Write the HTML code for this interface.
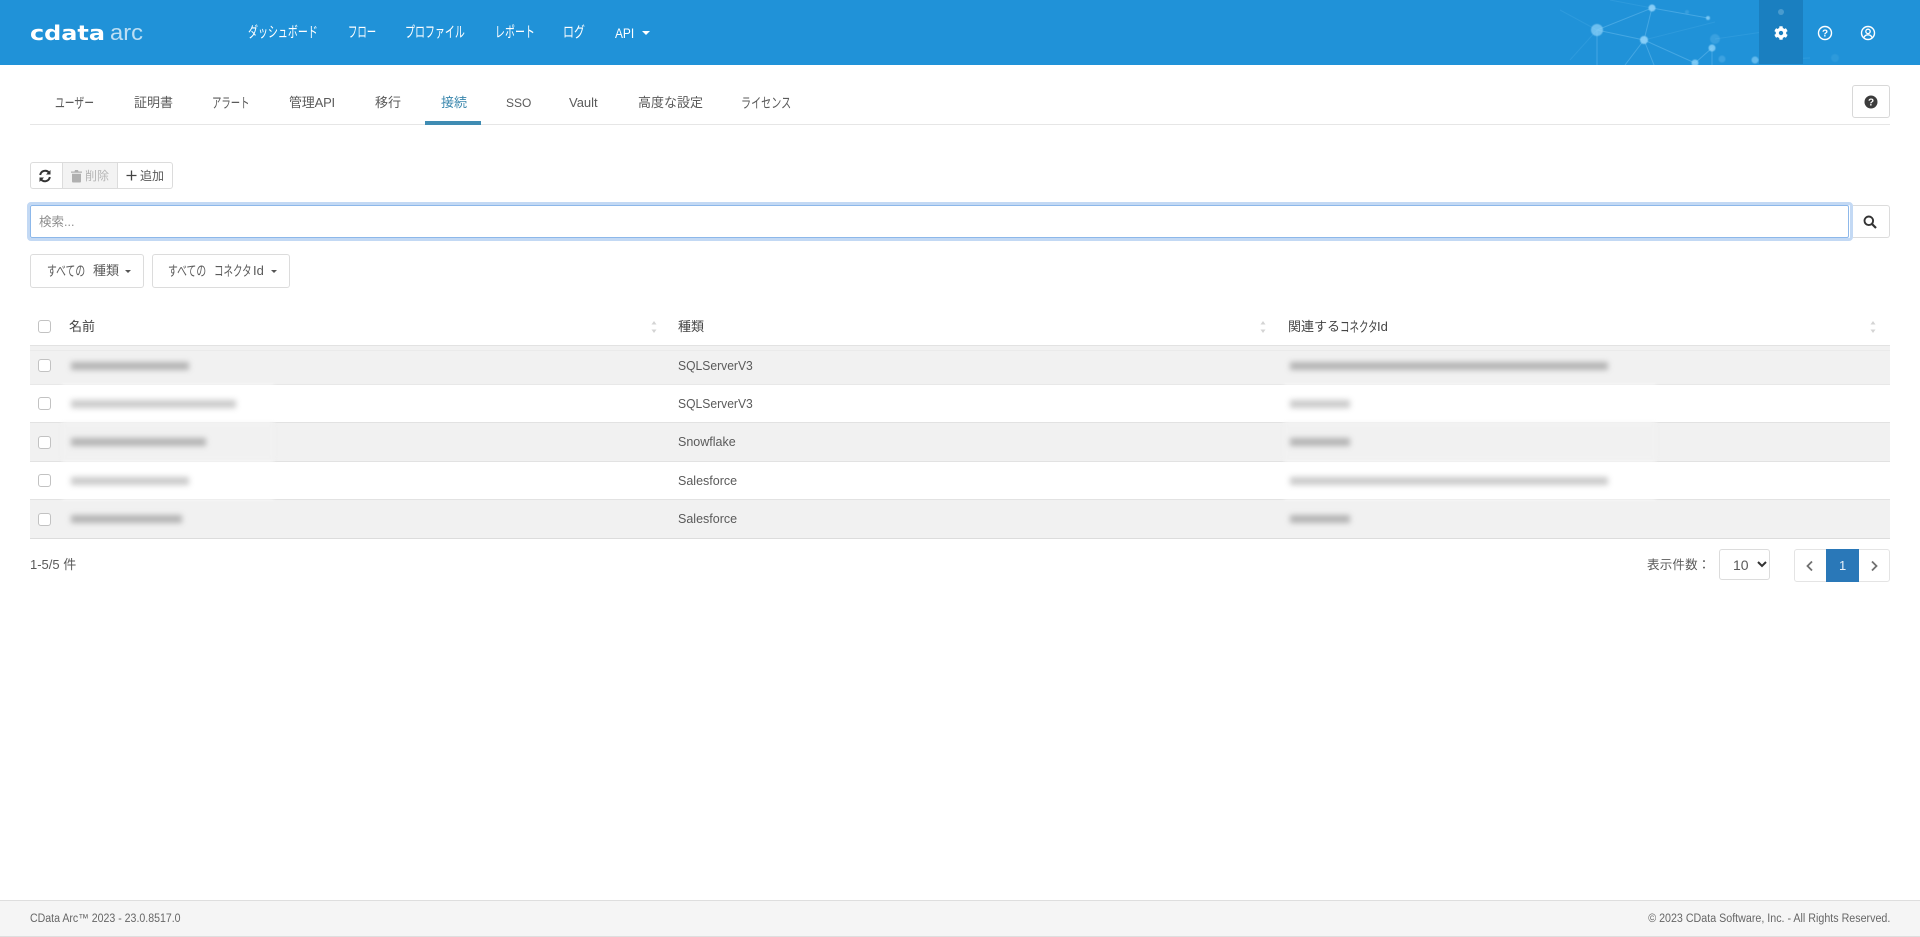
<!DOCTYPE html>
<html lang="ja">
<head>
<meta charset="utf-8">
<title>CData Arc</title>
<style>
html,body{margin:0;padding:0;background:#fff}
body{position:relative;width:1920px;height:937px;overflow:hidden;font-family:"Liberation Sans","Noto Sans CJK JP",sans-serif;font-size:13px;color:#5a5a5a}
.a{position:absolute;box-sizing:border-box}
.t{position:absolute;white-space:nowrap;line-height:20px;height:20px;transform-origin:left center}
.n{color:#fff;font-size:15px;top:23px}
.k{color:#5a5a5a;font-size:13px;top:93px}
.b{background:#fff;border:1px solid #dcdcdc}
.row{position:absolute;left:30px;width:1860px}
.line{position:absolute;left:30px;width:1860px;height:1px;background:#e2e2e2}
.cb{position:absolute;left:38px;width:13px;height:13px;border:1px solid #c2c2c2;border-radius:3px;background:#fff;box-sizing:border-box}
.bl{position:absolute;height:8px;background:#8a8a8a;filter:blur(3px);opacity:.6}
.patch{position:absolute;filter:blur(2px)}
.caret{position:absolute;width:0;height:0;border-left:3px solid transparent;border-right:3px solid transparent;border-top:3px solid #555}
</style>
</head>
<body>
<!-- header -->
<div class="a" style="left:0;top:0;width:1920px;height:65px;background:#2092d8;overflow:hidden">
  <svg class="a" style="left:1500px;top:0" width="420" height="65" viewBox="1500 0 420 65">
    <g stroke="#7cc8f5" stroke-width="1" opacity=".4" fill="none">
      <path d="M1597 30L1652 8L1708 18M1652 8L1644 40L1597 30M1644 40L1695 63M1644 40L1660 80M1597 30V65M1644 40L1625 65M1695 63L1712 48V65"/>
    </g>
    <g stroke="#7cc8f5" stroke-width="1" opacity=".15" fill="none">
      <path d="M1644 40L1715 22M1715 39L1790 28M1560 10L1597 30M1597 30L1570 60M1610 0L1652 8M1755 60L1810 58"/>
    </g>
    <g fill="#8fd3fa" style="filter:blur(.6px)">
      <circle cx="1597" cy="30" r="6" opacity=".7"/>
      <circle cx="1652" cy="8" r="3.5" opacity=".9"/>
      <circle cx="1708" cy="18" r="2" opacity=".8"/>
      <circle cx="1644" cy="40" r="4" opacity=".9"/>
      <circle cx="1712" cy="48" r="3.500" opacity=".8"/>
      <circle cx="1695" cy="63" r="3.500" opacity=".8"/>
      <circle cx="1755" cy="60" r="3.500" opacity=".6"/>
      <circle cx="1715" cy="39" r="5" opacity=".22"/>
      <circle cx="1722" cy="59" r="3.500" opacity=".25"/>
      <circle cx="1687" cy="12" r="2" opacity=".2"/>
      <circle cx="1835" cy="58" r="4" opacity=".12"/>
    </g>
  </svg>
  <div class="a" style="left:1759px;top:0;width:44px;height:64px;background:#1a7fc0"></div>
  <svg class="a" style="left:1759px;top:0" width="44" height="30"><circle cx="22" cy="12" r="3" fill="#5ea6d4" opacity=".7"/></svg>

  <svg class="a" style="left:28px;top:20px" width="125" height="26" viewBox="0 0 125 26">
    <text x="2" y="0" transform="translate(0,20) scale(1,1.15)" font-family="DejaVu Sans" font-weight="700" font-size="18" fill="#fff" textLength="75" lengthAdjust="spacingAndGlyphs">cdata</text>
    <text x="82" y="20" font-family="Liberation Sans" font-size="22" fill="#fff" opacity=".7" textLength="33" lengthAdjust="spacingAndGlyphs">arc</text>
  </svg>

  <span class="t n" style="left:248px;transform:scaleX(.665)">ダッシュボード</span>
  <span class="t n" style="left:348px;transform:scaleX(.625)">フロー</span>
  <span class="t n" style="left:405px;transform:scaleX(.665)">プロファイル</span>
  <span class="t n" style="left:495px;transform:scaleX(.665)">レポート</span>
  <span class="t n" style="left:563px;transform:scaleX(.73)">ログ</span>
  <span class="t n" style="left:615px;font-size:14px;transform:scaleX(.85)">API</span>
  <div class="caret" style="left:642px;top:31px;border-top-color:#fff;border-left-width:4px;border-right-width:4px;border-top-width:4px"></div>

  <svg class="a" style="left:1774px;top:26px" width="14" height="14" viewBox="0 0 512 512"><path fill="#fff" d="M487.4 315.7l-42.6-24.6c4.3-23.2 4.3-47 0-70.2l42.6-24.6c4.9-2.8 7.1-8.6 5.5-14-11.1-35.6-30-67.8-54.7-94.6-3.8-4.1-10-5.1-14.8-2.3L380.8 110c-17.9-15.4-38.5-27.3-60.8-35.1V25.8c0-5.6-3.9-10.5-9.4-11.7-36.7-8.2-74.3-7.8-109.2 0-5.5 1.2-9.4 6.1-9.4 11.7V75c-22.2 7.9-42.8 19.8-60.8 35.1L88.7 85.5c-4.9-2.8-11-1.9-14.8 2.3-24.7 26.7-43.6 58.9-54.7 94.6-1.7 5.4.6 11.2 5.5 14L67.3 221c-4.3 23.2-4.3 47 0 70.2l-42.6 24.6c-4.9 2.8-7.1 8.6-5.5 14 11.1 35.6 30 67.8 54.7 94.6 3.8 4.1 10 5.1 14.8 2.3l42.6-24.6c17.9 15.4 38.5 27.3 60.8 35.1v49.2c0 5.6 3.9 10.5 9.4 11.7 36.7 8.2 74.3 7.8 109.2 0 5.5-1.2 9.4-6.1 9.4-11.7v-49.2c22.2-7.9 42.8-19.8 60.8-35.1l42.6 24.6c4.9 2.8 11 1.9 14.8-2.3 24.7-26.7 43.6-58.9 54.7-94.6 1.5-5.5-.7-11.3-5.6-14.1zM256 336c-44.1 0-80-35.9-80-80s35.9-80 80-80 80 35.9 80 80-35.9 80-80 80z"/></svg>
  <svg class="a" style="left:1817px;top:25px" width="16" height="16" viewBox="0 0 16 16"><circle cx="8" cy="8" r="6.500" fill="none" stroke="#fff" stroke-width="1.400"/><text x="8" y="11.600" text-anchor="middle" font-family="Liberation Sans" font-weight="700" font-size="10" fill="#fff">?</text></svg>
  <svg class="a" style="left:1860px;top:25px" width="16" height="16" viewBox="0 0 16 16"><circle cx="8" cy="8" r="6.500" fill="none" stroke="#fff" stroke-width="1.400"/><circle cx="8" cy="6.400" r="2.200" fill="none" stroke="#fff" stroke-width="1.300"/><path d="M3.900 12.600c.8-2 2.300-2.800 4.100-2.800s3.300.8 4.100 2.800" fill="none" stroke="#fff" stroke-width="1.300"/></svg>
</div>

<!-- tabs -->
<span class="t k" style="left:55px;font-size:14px;transform:scaleX(.7)">ユーザー</span>
<span class="t k" style="left:134px">証明書</span>
<span class="t k" style="left:212px;font-size:14px;transform:scaleX(.67)">アラート</span>
<span class="t k" style="left:289px;letter-spacing:-.2px">管理API</span>
<span class="t k" style="left:375px">移行</span>
<span class="t k" style="left:441px;color:#3a87ad">接続</span>
<span class="t k" style="left:506px;font-size:12px">SSO</span>
<span class="t k" style="left:569px;font-size:13px">Vault</span>
<span class="t k" style="left:638px">高度な設定</span>
<span class="t k" style="left:741px;font-size:14px;transform:scaleX(.72)">ライセンス</span>
<div class="a" style="left:30px;top:124px;width:1860px;height:1px;background:#e6e6e6"></div>
<div class="a" style="left:425px;top:121px;width:56px;height:4px;background:#3f8cb3"></div>

<div class="a b" style="left:1852px;top:85px;width:38px;height:33px;border-radius:3px;border-color:#d8d8d8"></div>
<svg class="a" style="left:1864px;top:95px" width="14" height="14" viewBox="0 0 14 14"><circle cx="7" cy="7" r="6.500" fill="#3c3c3c"/><text x="7" y="10.500" text-anchor="middle" font-family="Liberation Sans" font-weight="700" font-size="10" fill="#fff">?</text></svg>

<!-- toolbar -->
<div class="a b" style="left:30px;top:162px;width:33px;height:27px;border-radius:3px 0 0 3px"></div>
<div class="a b" style="left:62px;top:162px;width:56px;height:27px;background:#f3f3f3"></div>
<div class="a b" style="left:117px;top:162px;width:56px;height:27px;border-radius:0 3px 3px 0"></div>
<svg class="a" style="left:38px;top:169px" width="14" height="14" viewBox="0 0 14 14"><g fill="none" stroke="#333" stroke-width="2"><path d="M2.200 6A5 5 0 0 1 11 3.600"/><path d="M11.800 8A5 5 0 0 1 3 10.400"/></g><path fill="#333" d="M12.500 1V5.500H8zM1.500 13V8.500H6z"/></svg>
<svg class="a" style="left:70px;top:169px" width="13" height="14" viewBox="0 0 13 14"><path fill="#b0b0b0" d="M1 2.500H4.500L5 1H8L8.500 2.500H12V3.800H1zM2 4.800H11V12.500Q11 13.500 10 13.500H3Q2 13.500 2 12.500z"/></svg>
<span class="t" style="left:85px;top:166px;color:#b5b5b5;font-size:12px">削除</span>
<svg class="a" style="left:126px;top:170px" width="11" height="11" viewBox="0 0 11 11"><path d="M5.500 .5V10.500M.5 5.500H10.500" stroke="#444" stroke-width="1.300"/></svg>
<span class="t" style="left:140px;top:166px;font-size:12px">追加</span>

<!-- search -->
<div class="a" style="left:27px;top:202px;width:1826px;height:39px;background:#fff;border:3px solid #c3d9f4;border-radius:4px"></div>
<div class="a" style="left:30px;top:205px;width:1819px;height:33px;background:#fff;border:1px solid #8db8ea;border-radius:2px"></div>
<span class="t" style="left:39px;top:212px;color:#8f8f8f;font-size:12.500px">検索...</span>
<div class="a b" style="left:1853px;top:205px;width:37px;height:33px;border-radius:0 3px 3px 0;border-left:0"></div>
<svg class="a" style="left:1863px;top:215px" width="14" height="14" viewBox="0 0 14 14"><circle cx="5.800" cy="5.800" r="4.300" fill="none" stroke="#333" stroke-width="1.900"/><path d="M9 9L13 13" stroke="#333" stroke-width="2.200"/></svg>

<!-- filters -->
<div class="a b" style="left:30px;top:254px;width:114px;height:34px;border-radius:3px"></div>
<span class="t" style="left:47px;top:261px;font-size:14px;transform:scaleX(.7)">すべての</span>
<span class="t" style="left:93px;top:261px">種類</span>
<div class="caret" style="left:125px;top:270px"></div>
<div class="a b" style="left:152px;top:254px;width:138px;height:34px;border-radius:3px"></div>
<span class="t" style="left:168px;top:261px;font-size:14px;transform:scaleX(.7)">すべての</span>
<span class="t" style="left:214px;top:261px;font-size:14px;transform:scaleX(.68)">コネクタ</span>
<span class="t" style="left:253px;top:261px">Id</span>
<div class="caret" style="left:271px;top:270px"></div>

<!-- table head -->
<div class="cb" style="top:320px"></div>
<span class="t" style="left:69px;top:317px;color:#444">名前</span>
<span class="t" style="left:678px;top:317px;color:#444">種類</span>
<span class="t" style="left:1288px;top:317px;color:#444">関連する</span>
<span class="t" style="left:1340px;top:317px;color:#444;font-size:14px;transform:scaleX(.68)">コネクタ</span>
<span class="t" style="left:1377px;top:317px;color:#444">Id</span>
<svg class="a" style="left:651px;top:320px" width="6" height="14"><path d="M3 1L5.500 4.500H.5zM3 13L5.500 9.500H.5z" fill="#d4d4d4"/></svg>
<svg class="a" style="left:1260px;top:320px" width="6" height="14"><path d="M3 1L5.500 4.500H.5zM3 13L5.500 9.500H.5z" fill="#d4d4d4"/></svg>
<svg class="a" style="left:1870px;top:320px" width="6" height="14"><path d="M3 1L5.500 4.500H.5zM3 13L5.500 9.500H.5z" fill="#d4d4d4"/></svg>

<!-- rows -->
<div class="row" style="top:346px;height:38px;background:#f1f1f1"></div>
<div class="row" style="top:422px;height:39px;background:#f1f1f1"></div>
<div class="row" style="top:499px;height:39px;background:#f1f1f1"></div>
<div class="line" style="top:345px"></div>
<div class="line" style="top:350px;background:#eaeaea"></div>
<div class="line" style="top:384px;background:#e8e8e8"></div>
<div class="line" style="top:422px"></div>
<div class="line" style="top:461px"></div>
<div class="line" style="top:499px"></div>
<div class="line" style="top:538px;background:#dcdcdc"></div>

<div class="patch" style="left:62px;top:385px;width:212px;height:37px;background:#fff"></div>
<div class="patch" style="left:62px;top:423px;width:212px;height:37px;background:#f1f1f1"></div>
<div class="patch" style="left:62px;top:462px;width:212px;height:37px;background:#fff"></div>
<div class="patch" style="left:1284px;top:385px;width:372px;height:37px;background:#fff"></div>
<div class="patch" style="left:1284px;top:423px;width:372px;height:37px;background:#f1f1f1"></div>
<div class="patch" style="left:1284px;top:462px;width:372px;height:37px;background:#fff"></div>

<div class="cb" style="top:359px"></div>
<div class="cb" style="top:397px"></div>
<div class="cb" style="top:436px"></div>
<div class="cb" style="top:474px"></div>
<div class="cb" style="top:513px"></div>

<div class="bl" style="left:71px;top:362px;width:118px"></div>
<div class="bl" style="left:71px;top:400px;width:165px;opacity:.45"></div>
<div class="bl" style="left:71px;top:438px;width:135px"></div>
<div class="bl" style="left:71px;top:477px;width:118px;opacity:.45"></div>
<div class="bl" style="left:71px;top:515px;width:111px"></div>

<span class="t" style="left:678px;top:356px;font-size:12.500px;transform:scaleX(.97)">SQLServerV3</span>
<span class="t" style="left:678px;top:394px;font-size:12.500px;transform:scaleX(.97)">SQLServerV3</span>
<span class="t" style="left:678px;top:432px;font-size:12.500px">Snowflake</span>
<span class="t" style="left:678px;top:471px;font-size:12.500px">Salesforce</span>
<span class="t" style="left:678px;top:509px;font-size:12.500px">Salesforce</span>

<div class="bl" style="left:1290px;top:362px;width:318px"></div>
<div class="bl" style="left:1290px;top:400px;width:60px;opacity:.45"></div>
<div class="bl" style="left:1290px;top:438px;width:60px"></div>
<div class="bl" style="left:1290px;top:477px;width:318px;opacity:.45"></div>
<div class="bl" style="left:1290px;top:515px;width:60px"></div>

<!-- pagination -->
<span class="t" style="left:30px;top:555px;font-size:13px">1-5/5 件</span>
<span class="t" style="left:1647px;top:555px;font-size:12.500px;letter-spacing:.2px">表示件数：</span>
<div class="a b" style="left:1719px;top:549px;width:51px;height:31px;border-radius:3px"></div>
<span class="t" style="left:1733px;top:555px;font-size:14px">10</span>
<svg class="a" style="left:1757px;top:561px" width="10" height="7" viewBox="0 0 10 7"><path d="M1 1L5 5L9 1" fill="none" stroke="#333" stroke-width="2"/></svg>
<div class="a b" style="left:1794px;top:549px;width:96px;height:33px;border-radius:3px;border-color:#e4e4e4"></div>
<div class="a" style="left:1826px;top:549px;width:33px;height:33px;background:#2a78b8"></div>
<span class="t" style="left:1839px;top:556px;color:#e8f2fa;font-size:13px">1</span>
<svg class="a" style="left:1805px;top:560px" width="9" height="12" viewBox="0 0 9 12"><path d="M7 1.500L2.500 6L7 10.500" fill="none" stroke="#707070" stroke-width="1.800"/></svg>
<svg class="a" style="left:1870px;top:560px" width="9" height="12" viewBox="0 0 9 12"><path d="M2 1.500L6.500 6L2 10.500" fill="none" stroke="#707070" stroke-width="1.800"/></svg>

<!-- footer -->
<div class="a" style="left:0;top:900px;width:1920px;height:37px;background:#f5f5f5;border-top:1px solid #dedede;border-bottom:1px solid #dedede"></div>
<span class="t" style="left:30px;top:909px;font-size:11.500px;color:#666;transform:scaleX(.92)">CData Arc™ 2023 - 23.0.8517.0</span>
<span class="t" style="right:30px;top:909px;font-size:11.500px;color:#666;transform-origin:right center;transform:scaleX(.93)">© 2023 CData Software, Inc. - All Rights Reserved.</span>
</body>
</html>
